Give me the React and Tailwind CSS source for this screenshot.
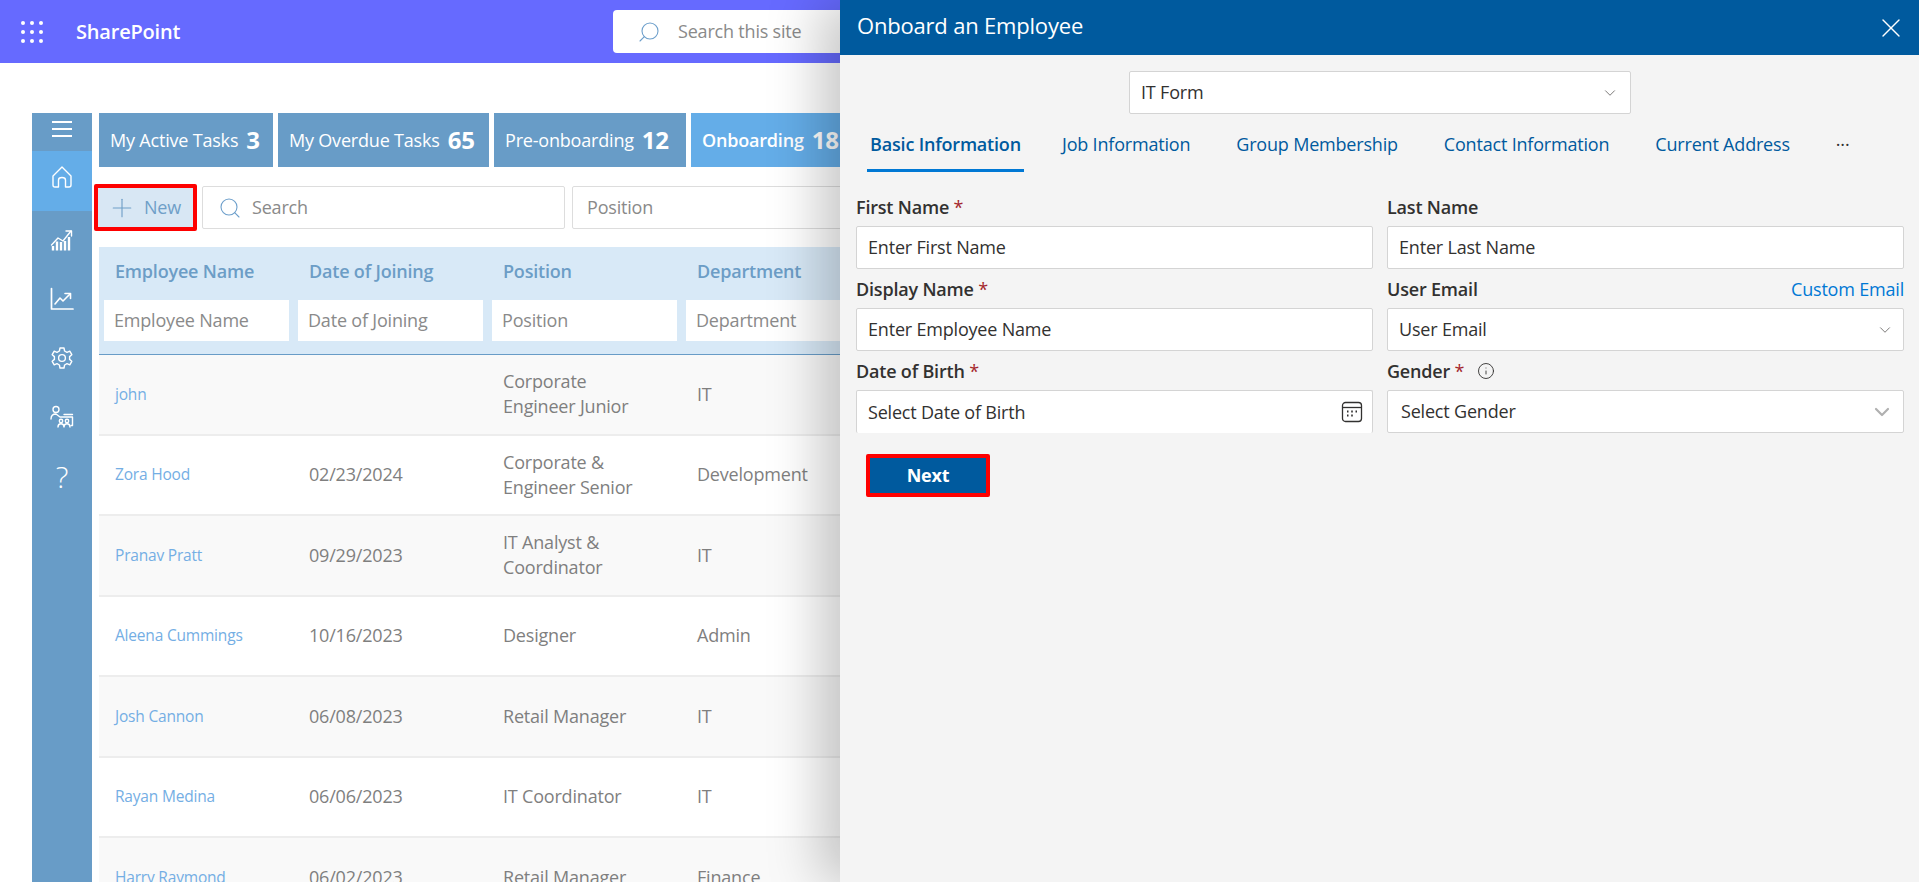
import { ChevronDown, Plus, Search, X, Info } from "lucide-react";

const rows = [
  { name: "john", date: "", position: ["Corporate", "Engineer Junior"], dept: "IT" },
  { name: "Zora Hood", date: "02/23/2024", position: ["Corporate &", "Engineer Senior"], dept: "Development" },
  { name: "Pranav Pratt", date: "09/29/2023", position: ["IT Analyst &", "Coordinator"], dept: "IT" },
  { name: "Aleena Cummings", date: "10/16/2023", position: ["Designer"], dept: "Admin" },
  { name: "Josh Cannon", date: "06/08/2023", position: ["Retail Manager"], dept: "IT" },
  { name: "Rayan Medina", date: "06/06/2023", position: ["IT Coordinator"], dept: "IT" },
  { name: "Harry Raymond", date: "06/02/2023", position: ["Retail Manager"], dept: "Finance" },
];

const tabs = ["Job Information", "Group Membership", "Contact Information", "Current Address"];

function Icon({ children }) {
  return (
    <svg width="24" height="24" viewBox="0 0 24 24" fill="none" stroke="white" strokeWidth="1.4" strokeLinecap="round" strokeLinejoin="round">
      {children}
    </svg>
  );
}

const navIcons = [
  <Icon key="growth">
    <path d="M1.5 17 L8 10 L13 13 L21 3" />
    <path d="M16 3 H21.5 V8" />
    <path d="M3 22.5 V18 M7 22.5 V13.5 M11 22.5 V14 M15 22.5 V13 M19 22.5 V9" strokeWidth="2.4" strokeLinecap="butt" />
  </Icon>,
  <Icon key="line">
    <path d="M1.5 1.5 V22 H23" strokeWidth="1.7" />
    <path d="M5 17 L10 11 L13 14 L20 7" strokeWidth="1.6" />
    <path d="M15 6.5 H20.5 V11.5" strokeWidth="1.6" />
  </Icon>,
  <Icon key="gear">
    <circle cx="12" cy="12" r="3.4" />
    <path d="M10 2 H14 L14.6 5 L17 6.3 L19.8 5.2 L21.8 8.7 L19.6 10.6 V13.4 L21.8 15.3 L19.8 18.8 L17 17.7 L14.6 19 L14 22 H10 L9.4 19 L7 17.7 L4.2 18.8 L2.2 15.3 L4.4 13.4 V10.6 L2.2 8.7 L4.2 5.2 L7 6.3 L9.4 5 Z" />
  </Icon>,
  <Icon key="people">
    <circle cx="6" cy="4.5" r="3" />
    <path d="M1 14 C1 10.5 3 9 6 9 L10 12 H22.5 V20.5 H21" />
    <path d="M14 9.5 H22.5" />
    <circle cx="11" cy="16" r="1.7" />
    <circle cx="17" cy="16" r="1.7" />
    <path d="M8 22 C8 20 9.5 18.8 11 18.8 C12.5 18.8 14 20 14 22 C14 20 15.5 18.8 17 18.8 C18.5 18.8 20 20 20 22" />
  </Icon>,
];

function Required({ children }) {
  return (
    <span>
      {children} <span className="font-normal text-[#a4262c]">*</span>
    </span>
  );
}

function Box({ children, className = "" }) {
  return (
    <div className={`flex h-[43px] items-center justify-between rounded-[2px] border border-[#d4d4d4] bg-white pl-[11px] pr-[9px] text-[18px] text-[#323130] ${className}`}>
      {children}
    </div>
  );
}

function Field({ label, extra, children }) {
  return (
    <div>
      <div className="flex h-[39px] items-center justify-between pt-[1px] text-[18px] font-semibold text-[#323130]">
        <span className="flex items-center">{label}</span>
        {extra}
      </div>
      {children}
    </div>
  );
}

function Tile({ label, count, active, className }) {
  return (
    <div className={`flex h-[54px] shrink-0 items-center whitespace-nowrap pl-[11px] ${className}`}>
      <span className={`text-[18px] ${active ? "font-semibold" : ""}`}>{label}</span>
      <span className="ml-[8px] text-[24px] font-bold">{count}</span>
    </div>
  );
}

export default function App() {
  return (
    <div className="relative h-screen overflow-hidden bg-white font-['Open_Sans','Noto_Sans',sans-serif] tracking-[-0.012em]">
      {/* suite bar */}
      <div className="flex h-[63px] items-center bg-[#666aff]">
        <div className="ml-[21px] grid w-[22px] grid-cols-3 gap-[5px]">
          {[0, 1, 2, 3, 4, 5, 6, 7, 8].map((i) => (
            <span key={i} className="h-[4px] w-[4px] rounded-full bg-white" />
          ))}
        </div>
        <div className="ml-[33px] w-[105px] text-[20px] font-semibold text-white">SharePoint</div>
        <div className="ml-[432px] flex h-[43px] w-[400px] items-center rounded-[4px] bg-white pl-[24px] text-[18px] text-[#8a8a8a]">
          <Search size={24} strokeWidth={1.1} className="-scale-x-100 text-[#6d9fcb]" />
          <span className="ml-[17px]">Search this site</span>
        </div>
      </div>

      {/* page */}
      <div className="ml-[32px] mt-[50px] flex">
        <div className="h-[769px] w-[60px] shrink-0 bg-[#689cc7]">
          <div className="flex h-[38px] items-center justify-center pb-[6px]">
            <div className="flex w-[20px] flex-col gap-[5px]">
              <span className="h-[2px] bg-white" />
              <span className="h-[2px] bg-white" />
              <span className="h-[2px] bg-white" />
            </div>
          </div>
          <div className="flex h-[60px] items-center justify-center bg-[#64ade8] pb-[8px]">
            <Icon>
              <path d="M3 11 L12 2 L21 11 V20 Q21 22 19 22 H15.5 V15 Q15.5 12.5 12 12.5 Q8.5 12.5 8.5 15 V22 H5 Q3 22 3 20 Z" />
            </Icon>
          </div>
          {navIcons.map((icon, i) => (
            <div key={i} className="flex h-[59px] items-center justify-center pb-[2px]">
              {icon}
            </div>
          ))}
          <div className="flex h-[59px] items-center justify-center text-[30px] font-light text-white">?</div>
        </div>

        <div className="ml-[7px] w-[900px] shrink-0">
          <div className="flex gap-[5px] text-white">
            <Tile label="My Active Tasks" count="3" className="w-[174px] bg-[#689cc7]" />
            <Tile label="My Overdue Tasks" count="65" className="w-[211px] bg-[#689cc7]" />
            <Tile label="Pre-onboarding" count="12" className="w-[192px] bg-[#689cc7]" />
            <Tile label="Onboarding" count="18" active className="w-[209px] bg-[#64ade8]" />
          </div>

          <div className="mt-[17px] flex h-[47px] items-center text-[18px]">
            <div className="-ml-[5px] flex h-[47px] w-[103px] items-center rounded-[2px] border-[4px] border-[#fe0000] bg-[#d8e7f4] pl-[9px] text-[#6f9fc8]">
              <Plus size={30} strokeWidth={0.9} className="shrink-0" />
              <span className="ml-[7px]">New</span>
            </div>
            <div className="ml-[5px] flex h-[43px] w-[363px] items-center rounded-[2px] border border-[#dddddd] pl-[15px] text-[#8a8a8a]">
              <Search size={24} strokeWidth={1.1} className="text-[#6d9fcb]" />
              <span className="ml-[10px]">Search</span>
            </div>
            <div className="ml-[7px] flex h-[43px] w-[300px] items-center rounded-[2px] border border-[#dddddd] pl-[14px] text-[#8a8a8a]">
              Position
            </div>
          </div>

          <div className="mt-[16px] h-[108px] border-b border-[#689cc7] bg-[#d8e9f7]">
            <div className="grid h-[53px] grid-cols-[194px_194px_194px_194px] items-center pb-[4px] pl-[16px] text-[18px] font-semibold text-[#6c9dc6]">
              <div>Employee Name</div>
              <div>Date of Joining</div>
              <div>Position</div>
              <div>Department</div>
            </div>
            <div className="grid grid-cols-[194px_194px_194px_194px] pl-[5px] text-[18px] text-[#8a8a8a]">
              {["Employee Name", "Date of Joining", "Position", "Department"].map((t) => (
                <div key={t} className="mr-[9px] flex h-[41px] items-center bg-white pl-[10px]">
                  {t}
                </div>
              ))}
            </div>
          </div>

          {rows.map((r, i) => (
            <div
              key={r.name}
              className={`grid h-[80.5px] grid-cols-[194px_194px_194px_194px] items-center border-b-2 border-[#ededed] pl-[16px] text-[18px] text-[#7f7f7f] ${i % 2 === 0 ? "bg-[#f9f9f9]" : "bg-white"}`}
            >
              <div className="text-[15.5px] text-[#74aee4]">{r.name}</div>
              <div>{r.date}</div>
              <div className="leading-[25px]">
                {r.position.map((p) => (
                  <div key={p}>{p}</div>
                ))}
              </div>
              <div>{r.dept}</div>
            </div>
          ))}
        </div>
      </div>

      {/* onboarding panel */}
      <div className="absolute bottom-0 right-0 top-0 w-[1079px] bg-[#f4f4f4] shadow-[-20px_0_50px_rgba(0,0,0,0.22)]">
        <div className="flex h-[55px] items-center justify-between bg-[#005a9e] pb-[4px] pl-[17px] pr-[12px] text-white">
          <span className="text-[22px]">Onboard an Employee</span>
          <X size={32} strokeWidth={1} className="mt-[4px]" />
        </div>

        <div className="ml-[289px] mt-[16px] flex h-[43px] w-[502px] items-center justify-between rounded-[2px] border border-[#d4d4d4] bg-white pl-[11px] pr-[11px] text-[18px] text-[#323130]">
          IT Form
          <ChevronDown size={18} strokeWidth={1.1} className="text-[#605e5c]" />
        </div>

        <div className="ml-[27px] mt-[14px] flex h-[44px] items-start text-[18px] text-[#005a9e]">
          <div className="flex h-[44px] w-[157px] justify-center whitespace-nowrap border-b-[3px] border-[#0078d4] pt-[3px] font-semibold">
            Basic Information
          </div>
          <div className="ml-[38px] flex gap-[46px] pt-[3px]">
            {tabs.map((t) => (
              <span key={t}>{t}</span>
            ))}
            <span className="text-[#323130]">···</span>
          </div>
        </div>

        <div className="mt-[15px] grid grid-cols-[517px_517px] gap-x-[14px] pl-[16px]">
          <Field label={<Required>First Name</Required>}>
            <Box>Enter First Name</Box>
          </Field>
          <Field label="Last Name">
            <Box>Enter Last Name</Box>
          </Field>
          <Field label={<Required>Display Name</Required>}>
            <Box>Enter Employee Name</Box>
          </Field>
          <Field label="User Email" extra={<span className="font-normal text-[#0078d4]">Custom Email</span>}>
            <Box>
              User Email
              <ChevronDown size={18} strokeWidth={1.1} className="text-[#605e5c]" />
            </Box>
          </Field>
          <Field label={<Required>Date of Birth</Required>}>
            <Box className="border-b-0 text-[#605e5c]">
              Select Date of Birth
              <svg width="22" height="22" viewBox="0 0 22 22" fill="none" stroke="#323130" strokeWidth="1.3">
                <rect x="1.5" y="1.5" width="19" height="19" rx="3" />
                <path d="M1.5 6.5 H20.5" />
                <path d="M6 10.5 H7.5 M10.2 10.5 H11.8 M14.5 10.5 H16 M6 14.5 H7.5 M10.2 14.5 H11.8" strokeWidth="1.8" />
              </svg>
            </Box>
          </Field>
          <Field
            label={
              <>
                <Required>Gender</Required>
                <Info size={18} strokeWidth={1.2} className="ml-[13px]" />
              </>
            }
          >
            <Box className="pl-[13px] pr-[2px]">
              Select Gender
              <ChevronDown size={24} strokeWidth={2.2} className="text-[#b0b0b0]" />
            </Box>
          </Field>
        </div>

        <div className="ml-[26px] mt-[21px] flex h-[43px] w-[124px] items-center justify-center rounded-[2px] border-[4px] border-[#fe0000] bg-[#005a9e] text-[18px] font-bold text-white">
          Next
        </div>
      </div>
    </div>
  );
}
